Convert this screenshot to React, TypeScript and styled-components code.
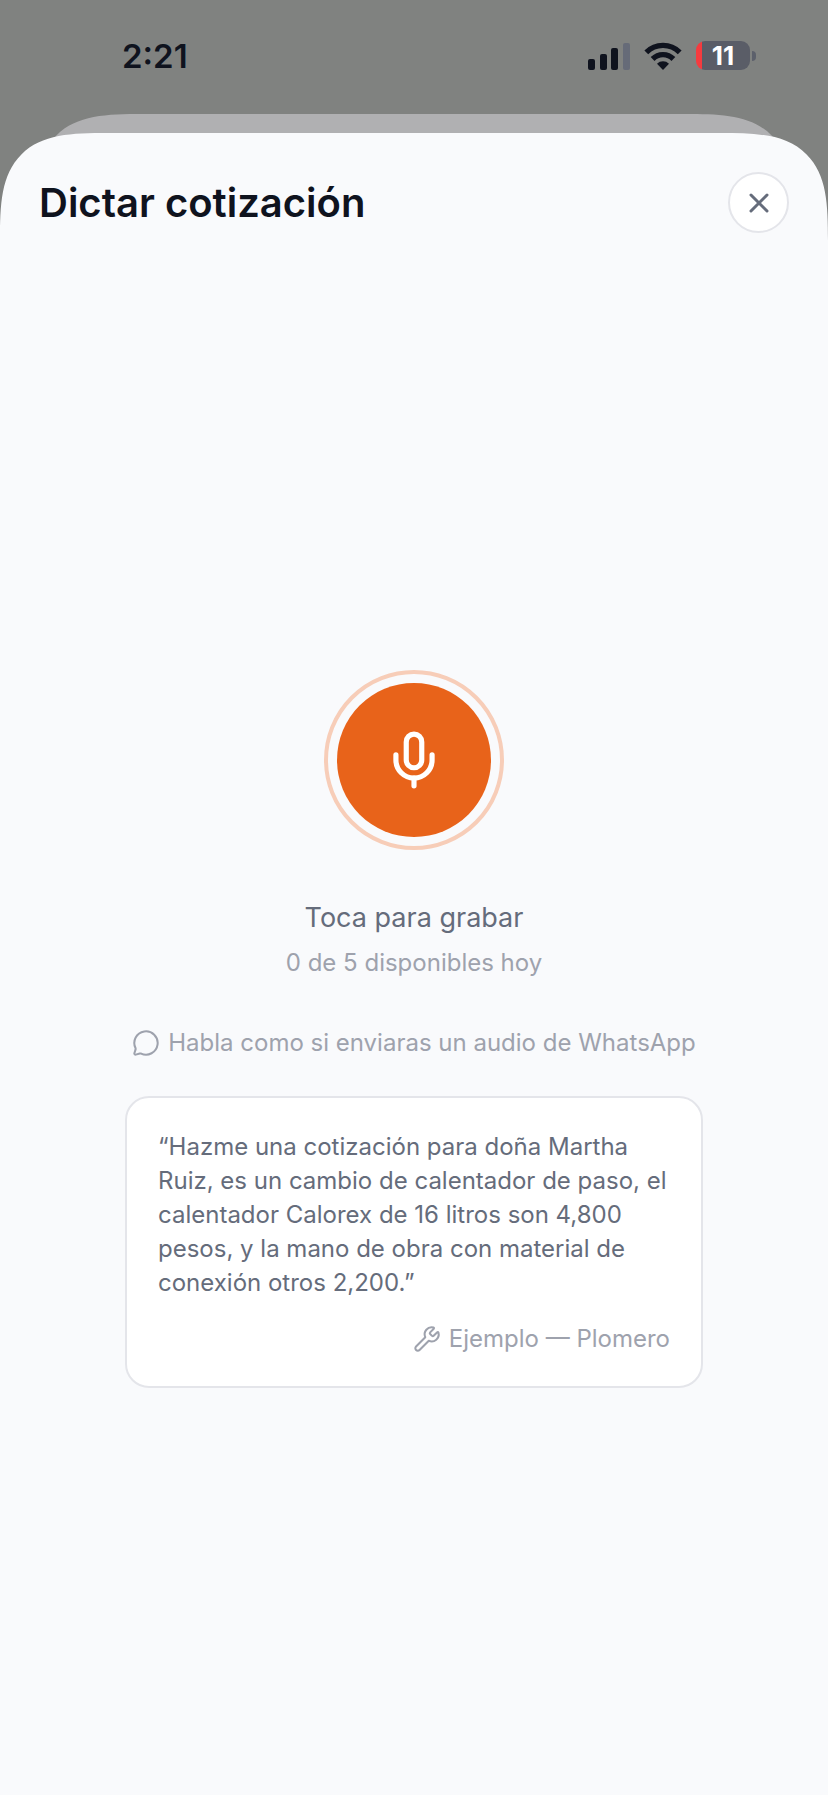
import React from "react";
import styled, { createGlobalStyle } from "styled-components";
import { MessageCircle, Mic, Wrench, X } from "lucide-react";

const ink = "#0f131e";
const slate = "#656c7b";
const muted = "#9ea2ad";
const line = "#e4e5ea";

const GlobalStyle = createGlobalStyle`
  *, *::before, *::after { box-sizing: border-box; }
  body {
    margin: 0;
    background: #808280;
    color: ${ink};
    font-family: Inter, "Liberation Sans", sans-serif;
  }
  h1, p, blockquote, figure { margin: 0; }
`;

const Screen = styled.div`
  min-height: 100vh;
  display: flex;
  flex-direction: column;
`;

const StatusBar = styled.div`
  height: 133px;
  padding: 35px 72px 57px 122px;
  display: flex;
  align-items: center;
  justify-content: space-between;
`;

const Clock = styled.time`
  font-size: 33px;
  line-height: 40px;
  font-weight: 600;
`;

const StatusIcons = styled.div`
  display: flex;
  align-items: center;
  gap: 14px;
`;

const Battery = styled.div`
  display: flex;
  align-items: center;
  gap: 2px;

  &::after {
    content: "";
    width: 4px;
    height: 10px;
    border-radius: 0 4px 4px 0;
    background: #5c606b;
  }
`;

const BatteryLevel = styled.span`
  width: 54px;
  height: 29px;
  border-radius: 9px;
  background: linear-gradient(to right, #f53b3f 6px, #5a5d67 6px);
  color: #fff;
  font-size: 26px;
  line-height: 29px;
  font-weight: 700;
  text-align: center;
`;

const Sheet = styled.main`
  position: relative;
  z-index: 0;
  flex: 1;
  display: flex;
  flex-direction: column;

  &::before,
  &::after {
    content: "";
    position: absolute;
    z-index: -1;
    border-radius: 68px 68px 0 0;
  }

  &::before {
    inset: -19px 35px auto;
    height: 160px;
    background: #b0b0b2;
  }

  &::after {
    inset: 0;
    background: #f9fafc;
  }

  @supports (corner-shape: squircle) {
    &::before,
    &::after {
      corner-shape: superellipse(1.65);
      border-radius: 108px 108px 0 0;
    }
  }
`;

const Header = styled.header`
  padding: 39px 39px 30px;
  display: flex;
  align-items: center;
  justify-content: space-between;
`;

const Title = styled.h1`
  font-size: 40px;
  line-height: 52px;
  font-weight: 600;
`;

const CloseButton = styled.button`
  width: 61px;
  height: 61px;
  padding: 0;
  display: grid;
  place-items: center;
  border: 2px solid ${line};
  border-radius: 50%;
  background: #fff;
  color: ${slate};
`;

const Body = styled.section`
  flex: 1;
  padding: 0 125px;
  display: flex;
  flex-direction: column;
  align-items: center;
  justify-content: center;
`;

const RecordButton = styled.button`
  width: 180px;
  height: 180px;
  padding: 9px;
  border: 4px solid #f7cdb8;
  border-radius: 50%;
  background: none;
`;

const RecordDisc = styled.span`
  height: 100%;
  display: grid;
  place-items: center;
  border-radius: 50%;
  background: #e8631a;
  color: #fff;
`;

const Prompt = styled.p`
  margin-top: 48px;
  font-size: 27px;
  line-height: 40px;
  color: ${slate};
`;

const Note = styled.p`
  display: flex;
  align-items: center;
  gap: 8px;
  font-size: 24px;
  line-height: 34px;
  color: ${muted};
  white-space: nowrap;
`;

const Quota = styled(Note)`
  margin-top: 8px;
`;

const Hint = styled(Note)`
  margin: 46px 0 36px;
`;

const Example = styled.figure`
  width: 100%;
  padding: 32px 31px 30px;
  display: flex;
  flex-direction: column;
  gap: 22px;
  border: 2px solid ${line};
  border-radius: 24px;
  background: #fff;
`;

const Quote = styled.blockquote`
  font-size: 24px;
  line-height: 34px;
  color: ${slate};
`;

const Source = styled(Note).attrs({ as: "figcaption" })`
  justify-content: flex-end;
`;

const SignalIcon = () => (
  <svg width="42" height="28" viewBox="0 0 42 28" aria-hidden="true">
    <rect x="0" y="17" width="7" height="11" rx="2" fill={ink} />
    <rect x="12" y="12" width="7" height="16" rx="2" fill={ink} />
    <rect x="23" y="6" width="7" height="22" rx="2" fill={ink} />
    <rect x="35" y="1" width="7" height="27" rx="2" fill="#666b78" />
  </svg>
);

const WifiIcon = () => (
  <svg width="38" height="28" viewBox="0 0 38 28" aria-hidden="true">
    <g fill="none" stroke={ink} strokeWidth="5.4">
      <path d="M2.3 10.3a23.6 23.6 0 0 1 33.4 0" />
      <path d="M8.6 17a14.6 14.6 0 0 1 20.8 0" />
    </g>
    <path d="M19 28l-6-6.2a8.6 8.6 0 0 1 12 0z" fill={ink} />
  </svg>
);

export default function App() {
  return (
    <Screen>
      <GlobalStyle />
      <StatusBar>
        <Clock>2:21</Clock>
        <StatusIcons>
          <SignalIcon />
          <WifiIcon />
          <Battery>
            <BatteryLevel>11</BatteryLevel>
          </Battery>
        </StatusIcons>
      </StatusBar>
      <Sheet>
        <Header>
          <Title>Dictar cotización</Title>
          <CloseButton type="button" aria-label="Cerrar">
            <X size={32} strokeWidth={2.25} />
          </CloseButton>
        </Header>
        <Body>
          <RecordButton type="button" aria-label="Grabar">
            <RecordDisc>
              <Mic size={62} />
            </RecordDisc>
          </RecordButton>
          <Prompt>Toca para grabar</Prompt>
          <Quota>0 de 5 disponibles hoy</Quota>
          <Hint>
            <MessageCircle size={28} strokeWidth={1.75} />
            Habla como si enviaras un audio de WhatsApp
          </Hint>
          <Example>
            <Quote>
              “Hazme una cotización para doña Martha Ruiz, es un cambio de
              calentador de paso, el calentador Calorex de 16 litros son 4,800
              pesos, y la mano de obra con material de conexión otros 2,200.”
            </Quote>
            <Source>
              <Wrench size={28} strokeWidth={1.75} />
              Ejemplo — Plomero
            </Source>
          </Example>
        </Body>
      </Sheet>
    </Screen>
  );
}
